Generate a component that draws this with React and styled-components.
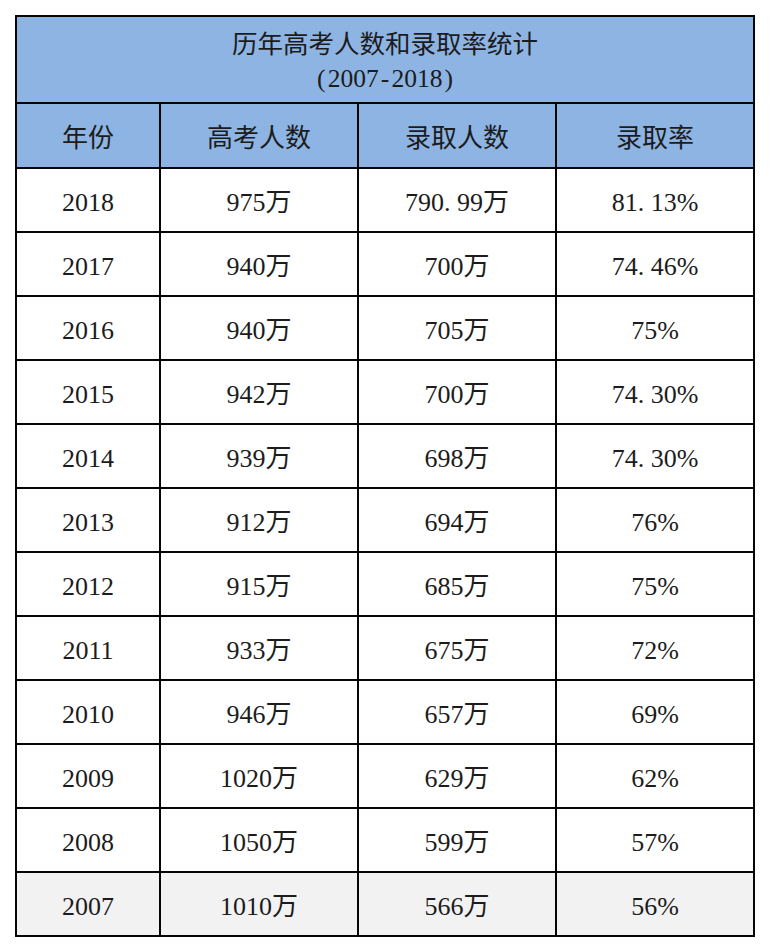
import React from "react";
import styled, { createGlobalStyle } from "styled-components";

const Global = createGlobalStyle`
  html, body { margin: 0; padding: 0; background: #ffffff; }
  body { font-family: "Liberation Serif", "Noto Sans CJK SC", serif; }
`;

const Page = styled.div`
  padding: 15px 0 0 15px;
  width: 770px;
  height: 952px;
  box-sizing: border-box;
`;

const Grid = styled.div`
  display: grid;
  width: 740px;
  grid-template-columns: 142px repeat(3, 196px);
  grid-template-rows: 85px 63px repeat(12, 62px);
  gap: 2px;
  padding: 2px;
  box-sizing: border-box;
  background: #050505;
`;

const Cell = styled.div`
  display: flex;
  align-items: center;
  justify-content: center;
  background: ${(p) => (p.$tone === "head" ? "#8db4e2" : p.$tone === "shade" ? "#f2f2f3" : "#ffffff")};
  color: #1c1c1c;
  font-family: "Liberation Serif", "Noto Sans CJK SC", serif;
  font-size: 26px;
  line-height: 1;
  padding-top: ${(p) => (p.$tone === "head" ? "6px" : "5px")};
  box-sizing: border-box;
  white-space: nowrap;
`;

const TitleCell = styled(Cell)`
  grid-column: 1 / -1;
  flex-direction: column;
  font-size: 25.5px;
  line-height: 33.5px;
  padding-top: 4px;
`;

const Half = styled.span`
  display: inline-block;
  width: 0.5em;
  text-align: ${(p) => p.$align || "center"};
`;

function Txt({ s }) {
  return (
    <>
      {s.split("").map((ch, i) =>
        ch === "." ? (
          <Half key={i} $align="left">.</Half>
        ) : ch === "-" || ch === "(" || ch === ")" ? (
          <Half key={i}>{ch}</Half>
        ) : (
          ch
        )
      )}
    </>
  );
}

const rows = [
  ["2018", "975万", "790.99万", "81.13%"],
  ["2017", "940万", "700万", "74.46%"],
  ["2016", "940万", "705万", "75%"],
  ["2015", "942万", "700万", "74.30%"],
  ["2014", "939万", "698万", "74.30%"],
  ["2013", "912万", "694万", "76%"],
  ["2012", "915万", "685万", "75%"],
  ["2011", "933万", "675万", "72%"],
  ["2010", "946万", "657万", "69%"],
  ["2009", "1020万", "629万", "62%"],
  ["2008", "1050万", "599万", "57%"],
  ["2007", "1010万", "566万", "56%"],
];

const headers = ["年份", "高考人数", "录取人数", "录取率"];

export default function App() {
  return (
    <Page>
      <Global />
      <Grid>
        <TitleCell $tone="head">
          <span>历年高考人数和录取率统计</span>
          <span>
            <Txt s="(2007-2018)" />
          </span>
        </TitleCell>
        {headers.map((h) => (
          <Cell key={h} $tone="head">{h}</Cell>
        ))}
        {rows.map((r, ri) =>
          r.map((c, ci) => (
            <Cell key={`${ri}-${ci}`} $tone={ri === rows.length - 1 ? "shade" : "plain"}>
              <Txt s={c} />
            </Cell>
          ))
        )}
      </Grid>
    </Page>
  );
}
